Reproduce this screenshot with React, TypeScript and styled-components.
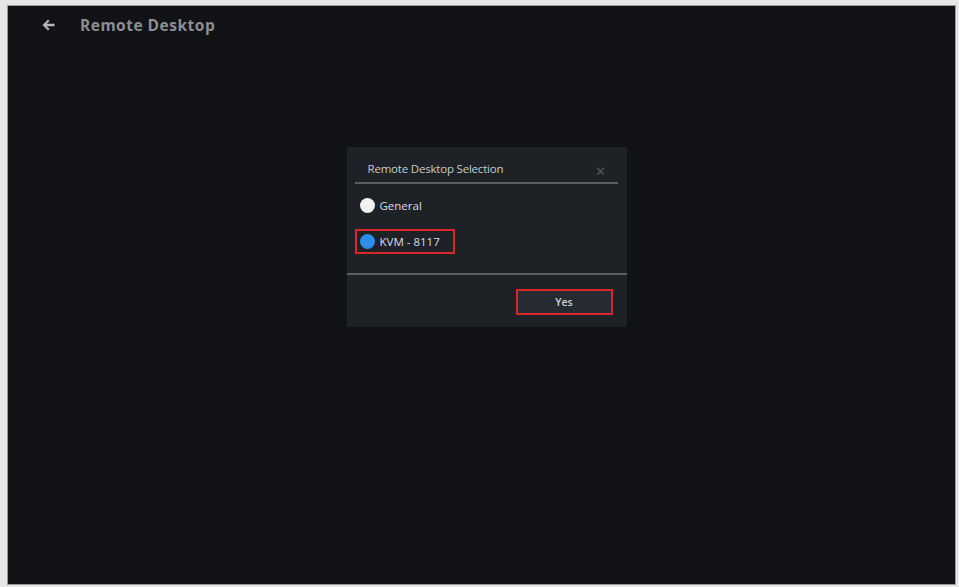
import styled, { createGlobalStyle } from "styled-components";

const GlobalStyle = createGlobalStyle`
  html, body {
    margin: 0;
    padding: 0;
    background: #e4e4e4;
    font-family: "Open Sans", "Noto Sans", "Liberation Sans", sans-serif;
  }
`;

const Frame = styled.div`
  width: 959px;
  height: 587px;
  box-sizing: border-box;
  padding: 6px 4px 3px 8px;
  background: #e6e6e6;
`;

const Screen = styled.div`
  height: 100%;
  background: #111216;
  box-shadow: 0 0 0 1px #9a9a9a;
  display: flex;
  flex-direction: column;
`;

const Header = styled.div`
  display: flex;
  align-items: center;
  gap: 25px;
  padding: 10px 0 0 34px;
  height: 18px;
`;

const HeaderTitle = styled.span`
  color: #8d8e92;
  font-size: 15.5px;
  font-weight: 700;
  letter-spacing: 0.5px;
`;

const Main = styled.div`
  flex: 1;
  display: flex;
  justify-content: center;
  padding: 113px 0 0 10px;
`;

const Dialog = styled.div`
  width: 280px;
  height: 180px;
  background: #1e2126;
  display: flex;
  flex-direction: column;
  box-sizing: border-box;
`;

const DialogHead = styled.div`
  display: flex;
  align-items: flex-end;
  justify-content: space-between;
  margin: 0 9px 0 8px;
  padding: 14px 12px 6px 13px;
  border-bottom: 2px solid #5b5e63;
`;

const DialogTitle = styled.span`
  color: #c9cacd;
  font-size: 11.5px;
  letter-spacing: -0.2px;
`;

const Close = styled.span`
  color: #55585d;
  font-size: 13px;
  line-height: 1;
  margin-bottom: -2px;
`;

const Options = styled.div`
  display: flex;
  flex-direction: column;
  gap: 11px;
  padding: 9px 0 19px 8px;
  border-bottom: 2px solid #5b5e63;
`;

const Option = styled.label<{ $marked?: boolean }>`
  display: flex;
  align-items: center;
  gap: 5px;
  width: 93px;
  height: 21px;
  padding-left: 3px;
  border: 2px solid ${(p) => (p.$marked ? "#d8262b" : "transparent")};
  color: #dcdde0;
  font-size: 11.5px;
`;

const Radio = styled.span<{ $checked?: boolean }>`
  width: 15px;
  height: 15px;
  border-radius: 50%;
  background: ${(p) => (p.$checked ? "#2c8ee8" : "#f2f2f2")};
  flex-shrink: 0;
`;

const Footer = styled.div`
  display: flex;
  justify-content: flex-end;
  padding: 14px 14px 0 0;
`;

const YesButton = styled.button`
  width: 97px;
  height: 26px;
  background: #262a31;
  border: 2px solid #d8262b;
  color: #d0d1d4;
  font-family: inherit;
  font-size: 10.5px;
  font-weight: 600;
`;

function BackArrow() {
  return (
    <svg width="13" height="12" viewBox="0 0 13 12">
      <path d="M6 0.5 L0.5 6 L6 11.5 L7.6 10 L4.6 7.2 H12.5 V4.8 H4.6 L7.6 2 Z" fill="#b5b6b9" />
    </svg>
  );
}

export default function App() {
  return (
    <Frame>
      <GlobalStyle />
      <Screen>
        <Header>
          <BackArrow />
          <HeaderTitle>Remote Desktop</HeaderTitle>
        </Header>
        <Main>
          <Dialog>
            <DialogHead>
              <DialogTitle>Remote Desktop Selection</DialogTitle>
              <Close>✕</Close>
            </DialogHead>
            <Options>
              <Option>
                <Radio />
                General
              </Option>
              <Option $marked>
                <Radio $checked />
                KVM - 8117
              </Option>
            </Options>
            <Footer>
              <YesButton>Yes</YesButton>
            </Footer>
          </Dialog>
        </Main>
      </Screen>
    </Frame>
  );
}
